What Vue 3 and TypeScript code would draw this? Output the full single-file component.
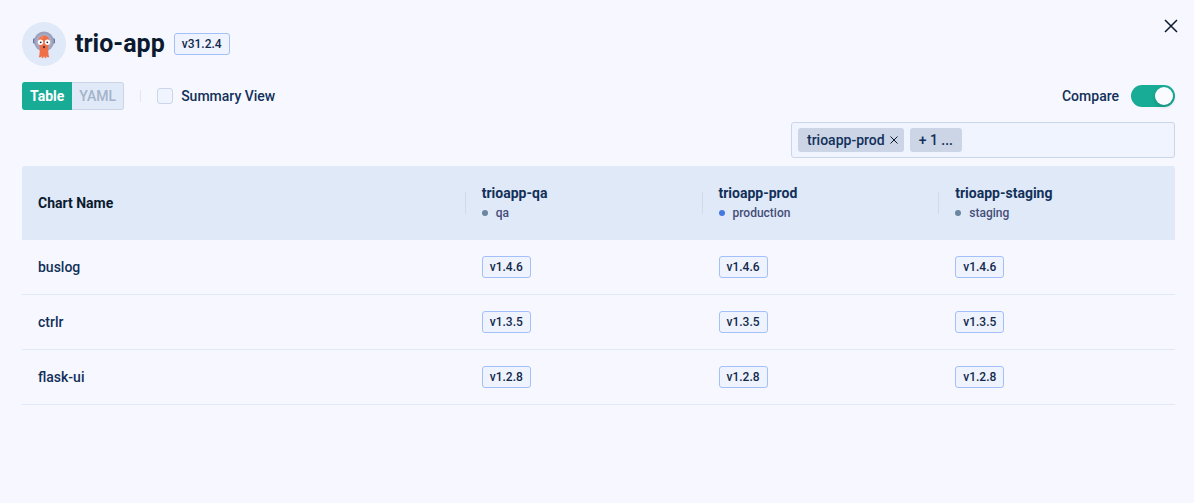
<script setup lang="ts">
import { ref } from 'vue'

interface Environment {
  name: string
  stage: string
  live: boolean
}

interface Chart {
  name: string
  versions: string[]
}

const view = ref<'Table' | 'YAML'>('Table')
const summary = ref(false)
const compare = ref(true)

const environments: Environment[] = [
  { name: 'trioapp-qa', stage: 'qa', live: false },
  { name: 'trioapp-prod', stage: 'production', live: true },
  { name: 'trioapp-staging', stage: 'staging', live: false },
]

const charts: Chart[] = [
  { name: 'buslog', versions: ['v1.4.6', 'v1.4.6', 'v1.4.6'] },
  { name: 'ctrlr', versions: ['v1.3.5', 'v1.3.5', 'v1.3.5'] },
  { name: 'flask-ui', versions: ['v1.2.8', 'v1.2.8', 'v1.2.8'] },
]
</script>

<template>
  <main class="panel">
    <header class="header">
      <div class="avatar">
        <svg width="24" height="30" viewBox="0 0 24 30" aria-hidden="true">
          <rect x="1" y="9.500" width="3" height="5" rx="1" fill="#6d6f9e" />
          <rect x="20" y="9.500" width="3" height="5" rx="1" fill="#6d6f9e" />
          <circle cx="12" cy="12.500" r="10" fill="#9ba0bb" />
          <circle cx="12" cy="13" r="8" fill="#a9aec6" />
          <path
            d="M12 6.500C8.500 6.500 6.600 9 6.600 12.500C6.600 15.500 7.900 17 7.800 20C7.700 23.500 7.700 25.500 6.800 28C8 28.800 9.100 28 9.500 27L9.800 29.300L11.300 28.800L12 27L12.700 28.800L14.200 29.300L14.500 27C14.900 28 16 28.800 17.200 28C16.300 25.500 16.300 23.500 16.200 20C16.100 17 17.400 15.500 17.400 12.500C17.400 9 15.500 6.500 12 6.500Z"
            fill="#ef7046"
          />
          <path d="M9 9.300Q9.500 8 11 7.800" stroke="#fba185" stroke-width="1" fill="none" />
          <circle cx="8.500" cy="13.300" r="2.700" fill="#fff" />
          <circle cx="15.500" cy="13.300" r="2.700" fill="#fff" />
          <circle cx="8.700" cy="13.300" r="0.900" fill="#27243a" />
          <circle cx="15.300" cy="13.300" r="0.900" fill="#27243a" />
          <path d="M10.700 17.500Q12 16.500 13.300 17.800Q12.700 19.700 11.500 19.200Z" fill="#432b38" />
        </svg>
      </div>
      <h1 class="title">trio-app</h1>
      <span class="badge">v31.2.4</span>
      <button class="close" type="button" aria-label="Close">
        <svg width="14" height="14" viewBox="0 0 14 14" aria-hidden="true">
          <path d="M1 1L13 13M13 1L1 13" stroke="#0b1a2b" stroke-width="1.500" />
        </svg>
      </button>
    </header>

    <div class="toolbar">
      <div class="tabs">
        <button type="button" class="tab" :class="{ active: view === 'Table' }" :aria-pressed="view === 'Table'" @click="view = 'Table'">Table</button>
        <button type="button" class="tab" :class="{ active: view === 'YAML' }" :aria-pressed="view === 'YAML'" @click="view = 'YAML'">YAML</button>
      </div>
      <span class="divider"></span>
      <label class="summary">
        <input v-model="summary" type="checkbox" class="checkbox" />
        Summary View
      </label>
      <label class="compare">
        Compare
        <input v-model="compare" type="checkbox" role="switch" class="switch" />
      </label>
    </div>

    <div class="picker" role="group" aria-label="Compared environments">
      <span class="chip">
        trioapp-prod
        <button class="remove" type="button" aria-label="Remove trioapp-prod">
          <svg width="8" height="8" viewBox="0 0 8 8" aria-hidden="true">
            <path d="M.5 .5L7.500 7.500M7.500 .5L.5 7.500" stroke="#0b1a2b" stroke-width="1" />
          </svg>
        </button>
      </span>
      <button class="chip more" type="button">+ 1 ...</button>
    </div>

    <table class="charts">
      <thead>
        <tr>
          <th class="first" scope="col">Chart Name</th>
          <th v-for="env in environments" :key="env.name" scope="col">
            <div class="env">
              <div>
                <div class="env-name">{{ env.name }}</div>
                <div class="stage"><span class="dot" :class="{ live: env.live }"></span>{{ env.stage }}</div>
              </div>
            </div>
          </th>
        </tr>
      </thead>
      <tbody>
        <tr v-for="chart in charts" :key="chart.name">
          <td class="first">{{ chart.name }}</td>
          <td v-for="(version, i) in chart.versions" :key="i">
            <span class="badge">{{ version }}</span>
          </td>
        </tr>
      </tbody>
    </table>
  </main>
</template>

<style>
body {
  margin: 0;
  background: #f7f8ff;
}
</style>

<style scoped>
.panel {
  box-sizing: border-box;
  min-height: 100vh;
  padding: 22px 19px 22px 22px;
  font: 500 14px/20px Roboto, "Liberation Sans", sans-serif;
  color: #12305a;
}

button {
  margin: 0;
  border: 0;
  padding: 0;
  background: none;
  font: inherit;
  color: inherit;
  cursor: pointer;
}

svg {
  display: block;
}

.header {
  display: flex;
  align-items: center;
  gap: 9px;
}

.avatar {
  display: grid;
  place-items: center;
  width: 44px;
  height: 44px;
  border-radius: 50%;
  background: #dfe9f7;
}

.title {
  margin: 0;
  font-size: 25px;
  line-height: 32px;
  font-weight: 700;
  color: #0b1a2e;
}

.badge {
  display: inline-block;
  border: 1px solid #a3c0fb;
  border-radius: 3px;
  padding: 0 7px;
  background: #eef3fe;
  font-size: 12px;
  line-height: 20px;
  color: #12294b;
}

.close {
  align-self: flex-start;
  margin: -3px -3px 0 auto;
}

.toolbar {
  display: flex;
  align-items: center;
  height: 28px;
  margin-top: 16px;
}

.tabs {
  display: flex;
}

.tab {
  height: 28px;
  box-sizing: border-box;
  border: 1px solid #cad5e8;
  border-left: 0;
  border-radius: 0 3px 3px 0;
  padding: 0 7px;
  background: #dfe9f7;
  color: #a4b3ca;
}

.tab:first-child {
  border-left: 1px solid #cad5e8;
  border-right: 0;
  border-radius: 3px 0 0 3px;
  padding-right: 8px;
}

.tab.active,
.tab.active:first-child {
  border-color: #18ac96;
  background: #18ac96;
  color: #fff;
  font-weight: 700;
}

.divider {
  width: 1px;
  height: 12px;
  margin: 0 16px;
  background: #dfe6f3;
}

.summary,
.compare {
  display: flex;
  align-items: center;
  gap: 8px;
}

.compare {
  gap: 12px;
  margin-left: auto;
}

.checkbox {
  appearance: none;
  box-sizing: border-box;
  width: 16px;
  height: 16px;
  margin: 0;
  border: 1px solid #cad5e8;
  border-radius: 3px;
  background: #f0f4fe;
}

.checkbox:checked {
  background: #18ac96;
}

.switch {
  appearance: none;
  display: flex;
  box-sizing: border-box;
  width: 44px;
  height: 22px;
  margin: 0;
  border-radius: 11px;
  padding: 2px;
  background: #b8c4d8;
}

.switch::before {
  content: "";
  width: 18px;
  height: 18px;
  border-radius: 50%;
  background: #f9fbff;
  box-shadow: 0 2px 4px rgba(0, 35, 11, 0.2);
}

.switch:checked {
  justify-content: flex-end;
  background: #18ac96;
}

.picker {
  display: flex;
  align-items: center;
  gap: 6px;
  box-sizing: border-box;
  width: 384px;
  max-width: 100%;
  min-height: 36px;
  margin: 12px 0 8px auto;
  border: 1px solid #cad5e8;
  border-radius: 3px;
  padding: 0 6px;
  background: #eff4fe;
}

.chip {
  display: flex;
  align-items: center;
  gap: 5px;
  height: 24px;
  border-radius: 3px;
  padding: 0 6px 0 9px;
  background: #cbd5e6;
}

.more {
  padding-right: 9px;
}

.charts {
  width: 100%;
  table-layout: fixed;
  border-spacing: 0;
}

th,
td {
  padding: 0 0 0 17px;
  text-align: left;
}

th {
  height: 74px;
  background: #dfe9f7;
  font-weight: 700;
}

.first {
  width: 38.4%;
  box-sizing: border-box;
  padding-left: 16px;
}

th.first {
  border-radius: 3px 0 0 0;
  color: #0b1a2e;
}

th:last-child {
  border-radius: 0 3px 0 0;
}

th:not(.first) {
  padding-left: 0;
}

.env {
  display: flex;
  align-items: center;
  gap: 16px;
}

.env::before {
  content: "";
  width: 1px;
  height: 22px;
  background: #cfdaeb;
}

.stage {
  display: flex;
  align-items: center;
  gap: 8px;
  font-size: 12px;
  font-weight: 500;
  color: #454d78;
}

.dot {
  width: 6px;
  height: 6px;
  border-radius: 50%;
  background: #6b86a0;
}

.dot.live {
  background: #477ae0;
}

td {
  height: 54px;
  border-bottom: 1px solid #dfe9f7;
}
</style>
